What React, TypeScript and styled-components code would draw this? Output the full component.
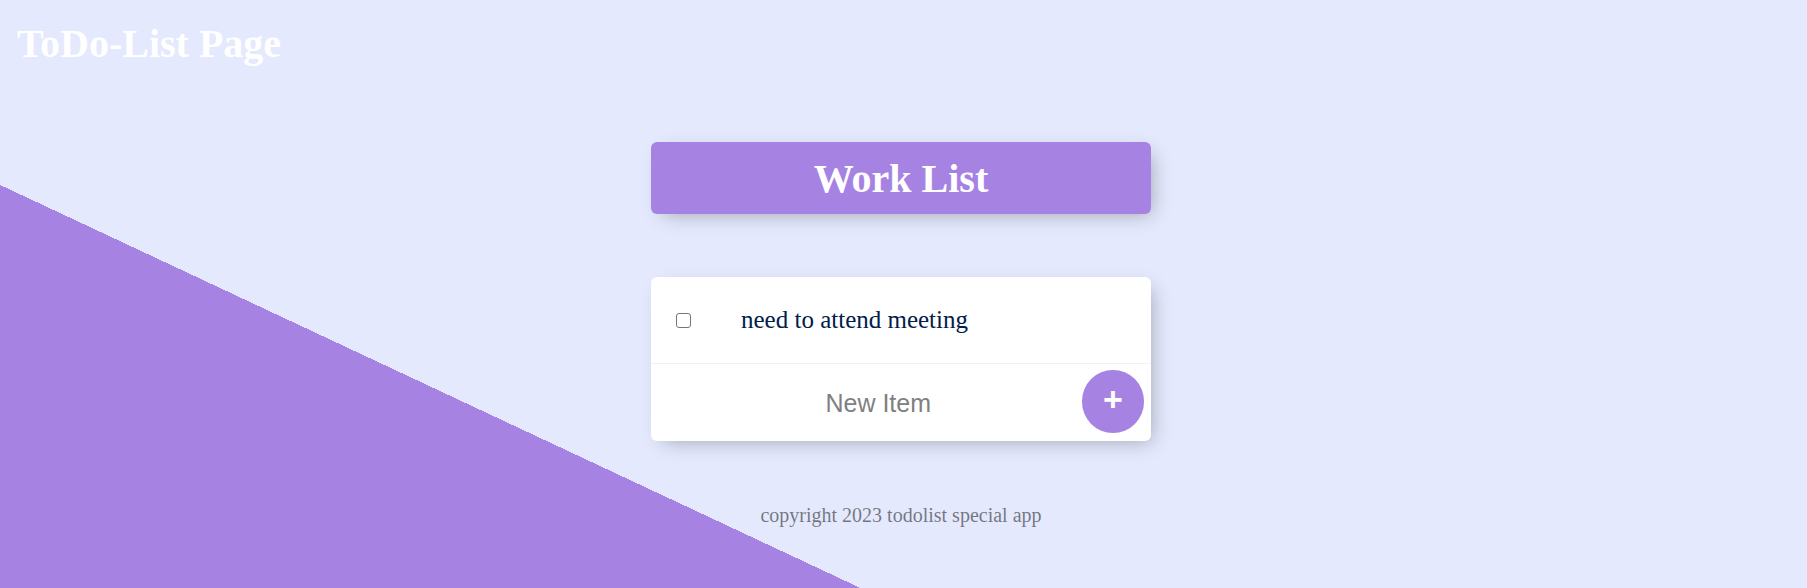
import React from "react";
import styled, { createGlobalStyle } from "styled-components";

const GlobalStyle = createGlobalStyle`
  html, body {
    margin: 0;
    padding: 0;
    background: #E4E9FD;
  }
  * { box-sizing: border-box; }
`;

const Page = styled.div`
  min-height: 100vh;
  overflow: hidden;
  display: flex;
  flex-direction: column;
  background: linear-gradient(25.1deg, #A683E3 28.1%, #E4E9FD 28.1%);
  font-family: "Liberation Serif", "Times New Roman", serif;
`;

const Title = styled.h1`
  margin: 0;
  padding: 21px 0 0 17px;
  font-size: 40px;
  line-height: 46px;
  font-weight: 700;
  color: #ffffff;
`;

const Main = styled.main`
  display: flex;
  flex-direction: column;
  align-items: center;
  padding-right: 5px;
`;

const Box = styled.section<{ $top: number }>`
  width: 500px;
  margin-top: ${(p) => p.$top}px;
  background: #ffffff;
  border-radius: 6px;
  box-shadow: 6px 6px 19px -6px rgba(0, 0, 0, 0.3);
  overflow: hidden;
`;

const Heading = styled(Box)`
  background: #A683E3;
  padding: 14px 0 12px;
  text-align: center;
`;

const HeadingText = styled.h2`
  margin: 0;
  font-size: 40px;
  line-height: 46px;
  font-weight: 700;
  color: #ffffff;
`;

const Item = styled.div`
  min-height: 87px;
  display: flex;
  align-items: center;
  border-bottom: 1px solid #F1F1F1;
`;

const Check = styled.input`
  appearance: none;
  -webkit-appearance: none;
  width: 15px;
  height: 15px;
  margin: 0 25px;
  border: 1px solid #767676;
  border-radius: 3px;
  background: #ffffff;
  flex: none;
`;

const ItemText = styled.p`
  margin: 0;
  padding: 25px;
  font-size: 25px;
  font-weight: 200;
  color: #00204a;
`;

const Form = styled.form`
  height: 77px;
  padding: 2px 0 0 25px;
  display: flex;
  align-items: center;
  justify-content: center;
  gap: 8px;
`;

const TextInput = styled.input`
  width: 391px;
  height: 75px;
  border: none;
  background: transparent;
  text-align: center;
  font-family: "Liberation Sans", Arial, sans-serif;
  font-size: 25px;
  font-weight: 200;
  color: #333;
  outline: none;
  &::placeholder {
    color: grey;
    opacity: 1;
  }
`;

const AddButton = styled.button`
  width: 62.5px;
  height: 62.5px;
  flex: none;
  margin-top: -4px;
  border: 0;
  border-radius: 50%;
  background: #A683E3;
  color: #ffffff;
  font-family: "Liberation Sans", Arial, sans-serif;
  font-size: 34px;
  font-weight: 700;
  line-height: 1;
  padding: 0 0 5px;
  display: flex;
  align-items: center;
  justify-content: center;
`;

const Footer = styled.footer`
  margin-top: 63px;
  font-size: 20px;
  color: rgba(0, 0, 0, 0.5);
  text-align: center;
`;

export default function App() {
  return (
    <>
      <GlobalStyle />
      <Page>
        <Title>ToDo-List Page</Title>
        <Main>
          <Heading as="div" $top={75}>
            <HeadingText>Work List</HeadingText>
          </Heading>
          <Box $top={63}>
            <Item>
              <Check type="checkbox" />
              <ItemText>need to attend meeting</ItemText>
            </Item>
            <Form onSubmit={(e) => e.preventDefault()}>
              <TextInput type="text" placeholder="New Item" autoComplete="off" />
              <AddButton type="submit">+</AddButton>
            </Form>
          </Box>
          <Footer>copyright 2023 todolist special app</Footer>
        </Main>
      </Page>
    </>
  );
}
